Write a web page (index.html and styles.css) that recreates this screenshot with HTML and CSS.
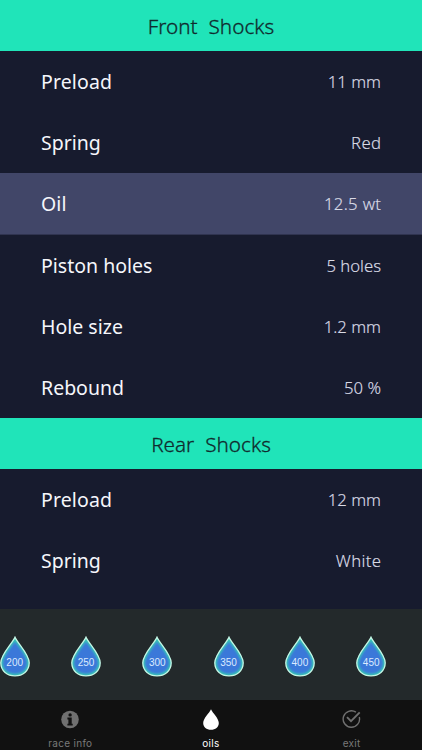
FILE: index.html
```
<!DOCTYPE html>
<html lang="en">
<head>
<meta charset="utf-8">
<title>Shocks setup</title>
<link rel="stylesheet" href="styles.css">
</head>
<body>
<svg class="defs" aria-hidden="true">
  <defs>
    <path id="drop-shape" d="M15 1.2C12.2 7.6 .8 18.2 .8 26.8C.8 35.2 7.3 39.8 15 39.8S29.2 35.2 29.2 26.8C29.2 18.2 17.8 7.6 15 1.2Z"/>
    <clipPath id="drop-clip"><use href="#drop-shape"/></clipPath>
    <filter id="soft" x="-20%" y="-20%" width="140%" height="140%"><feGaussianBlur stdDeviation="1.3"/></filter>
    <symbol id="drop" viewBox="0 0 30 41">
      <use href="#drop-shape" fill="#3b78d9"/>
      <g clip-path="url(#drop-clip)"><use href="#drop-shape" fill="none" stroke="#38c5b5" stroke-width="4.2" filter="url(#soft)"/></g>
      <use href="#drop-shape" fill="none" stroke="#c4f6e5" stroke-width="1.3"/>
    </symbol>
  </defs>
</svg>
<div class="app">
  <main class="list">
    <h2 class="section">Front <span>Shocks</span></h2>
    <div class="row"><span class="label">Preload</span><span class="value">11 mm</span></div>
    <div class="row"><span class="label compact">Spring</span><span class="value wide">Red</span></div>
    <div class="row selected"><span class="label">Oil</span><span class="value wide">12.5 wt</span></div>
    <div class="row"><span class="label compact">Piston holes</span><span class="value">5 holes</span></div>
    <div class="row"><span class="label compact">Hole size</span><span class="value">1.2 mm</span></div>
    <div class="row"><span class="label compact">Rebound</span><span class="value">50 %</span></div>
    <h2 class="section">Rear <span>Shocks</span></h2>
    <div class="row"><span class="label">Preload</span><span class="value">12 mm</span></div>
    <div class="row"><span class="label compact">Spring</span><span class="value wide">White</span></div>
  </main>
  <div class="oils">
    <div class="oil"><svg><use href="#drop"/></svg><span>200</span></div>
    <div class="oil"><svg><use href="#drop"/></svg><span>250</span></div>
    <div class="oil"><svg><use href="#drop"/></svg><span>300</span></div>
    <div class="oil"><svg><use href="#drop"/></svg><span>350</span></div>
    <div class="oil"><svg><use href="#drop"/></svg><span>400</span></div>
    <div class="oil"><svg><use href="#drop"/></svg><span>450</span></div>
  </div>
  <nav class="tabs">
    <div class="tab">
      <svg viewBox="0 0 20 22"><circle cx="10" cy="10.5" r="8.8" fill="#707070"/><circle cx="10.1" cy="5.9" r="1.7" fill="#111"/><path d="M7.4 8.6h4.3v6.1h1v1.8H7.4v-1.8h1v-4.3h-1z" fill="#111"/></svg>
      <span>race info</span>
    </div>
    <div class="tab active">
      <svg viewBox="0 0 20 22"><path d="M10 .2C8.3 4.1 2.2 9.2 2.2 14c0 4 3.4 6.8 7.8 6.8s7.8-2.8 7.8-6.8C17.8 9.2 11.7 4.1 10 .2z" fill="#fff"/></svg>
      <span>oils</span>
    </div>
    <div class="tab">
      <svg viewBox="0 0 20 22" fill="none" stroke="#707070" stroke-width="1.4"><path d="M13.9 3.2A8.2 8.2 0 1 0 17.3 8"/><path d="M5 8.2l4 4 8.7-8.8" stroke-width="1.9"/></svg>
      <span>exit</span>
    </div>
  </nav>
</div>
</body>
</html>
```
FILE: styles.css
```
* { box-sizing: border-box; }
body { margin: 0; background: #171b2e; font-family: "Noto Sans", "Open Sans", sans-serif; }
.defs { position: absolute; width: 0; height: 0; }
.app { display: flex; flex-direction: column; width: 422px; height: 750px; overflow: hidden; }
.list { flex: 1; min-height: 0; overflow: hidden; }
.section { display: flex; align-items: center; justify-content: center; gap: 11px; height: 51.2px; margin: 0; padding-top: 1px; background: #20e4b9; color: #102b2e; font-size: 20.7px; font-weight: 300; line-height: 28px; -webkit-text-stroke: .3px #102b2e; }
.row { display: flex; align-items: center; justify-content: space-between; height: 61.1px; padding: 1px 41px 0 41px; line-height: 28px; }
.selected { background: #414668; box-shadow: 0 .6px #414668; }
.label { color: #f5f6fb; font-size: 19.5px; letter-spacing: .12px; }
.compact { letter-spacing: 0; }
.value { color: #d9dae5; font-size: 16.7px; font-weight: 300; -webkit-text-stroke: .15px #d9dae5; }
.wide { letter-spacing: .35px; margin-right: -.35px; }
.oils { display: flex; align-items: center; gap: 41.3px; height: 90.5px; padding-top: 4.6px; margin-left: -.3px; background: #23292b; }
.oil { display: grid; flex: none; width: 30px; height: 41px; }
.oil svg, .oil span { grid-area: 1 / 1; }
.oil svg { width: 30px; height: 41px; }
.oil span { z-index: 1; padding-top: 20px; text-align: center; color: #dceaff; font: 10px/14px "Liberation Sans", sans-serif; }
.tabs { display: grid; grid-template-columns: repeat(3, 1fr); height: 50.5px; background: #111; }
.tab { display: flex; flex-direction: column; align-items: center; padding-top: 9px; color: #797979; font: 10px/12px Inter, sans-serif; letter-spacing: .3px; }
.tab svg { width: 20px; height: 22px; margin-bottom: 6px; }
.tab.active { color: #fff; }
```
